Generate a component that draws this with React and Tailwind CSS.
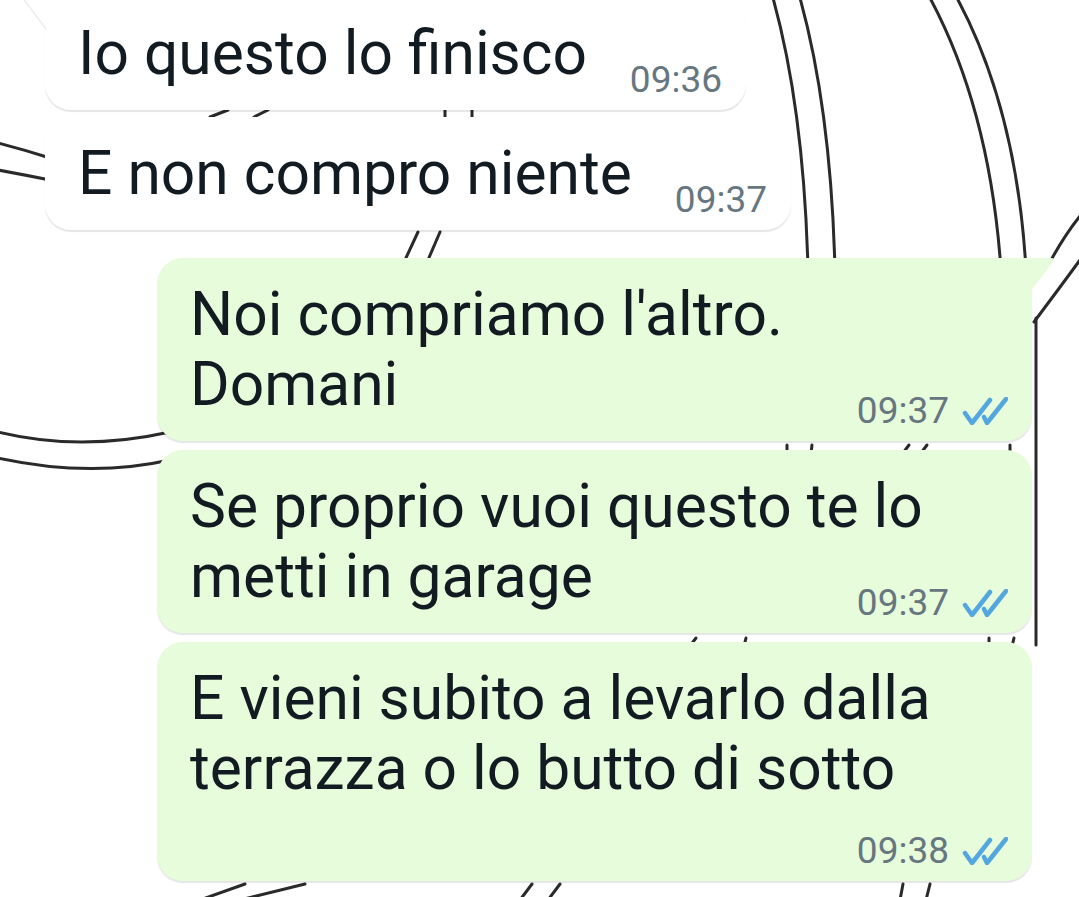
import React from "react";

function Ticks() {
  return (
    <svg width="46" height="28" viewBox="0 0 46 28" className="mb-[4px] ml-[13px]">
      <path d="M3 16 L10 26 L28 3" fill="none" stroke="#53a6de" strokeWidth="4.5" strokeLinecap="round" strokeLinejoin="round" />
      <path d="M22 20 L25 26 L44 2" fill="none" stroke="#53a6de" strokeWidth="4.5" strokeLinecap="round" strokeLinejoin="round" />
    </svg>
  );
}

function Doodles() {
  return (
    <svg className="absolute inset-0 w-full h-full" viewBox="0 0 1079 897" fill="none" stroke="#2a2a2a" strokeWidth="3" strokeLinecap="round">
      {/* arcs top right */}
      <path d="M773 -2 Q804 110 808 270" />
      <path d="M800 -2 Q831 110 835 270" />
      <path d="M930 -2 Q990 110 1001 270" />
      <path d="M957 -2 Q1017 110 1026 270" />
      <path d="M1080 216 Q1064 236 1050 262" />
      <path d="M1080 260 Q1058 290 1034 322" />
      <path d="M1036 318 L1036 645" />
      {/* left curves */}
      <path d="M-2 143 Q25 150 50 158" />
      <path d="M-2 170 Q25 175 50 180" />
      <path d="M-2 432 Q80 452 170 432" />
      <path d="M-2 458 Q90 478 170 460" />
      {/* dashes between bubbles */}
      <path d="M210 117 L228 110" />
      <path d="M254 117 L268 110" />
      <path d="M445 110 L445 117" />
      <path d="M472 110 L472 117" />
      <path d="M405 260 L418 232" />
      <path d="M428 260 L440 232" />
      <path d="M787 453 L787 445" />
      <path d="M811 453 L812 445" />
      <path d="M903 453 L909 445" />
      <path d="M921 453 L927 445" />
      <path d="M1010 453 L1010 445" />
      <path d="M690 646 L696 638" />
      <path d="M744 646 L746 638" />
      <path d="M989 646 L989 638" />
      <path d="M1012 646 L1014 638" />
      <path d="M200 900 L245 884" />
      <path d="M240 900 L305 884" />
      <path d="M520 900 L532 884" />
      <path d="M548 900 L560 884" />
      <path d="M900 900 L903 884" />
      <path d="M926 900 L930 884" />
    </svg>
  );
}

function Bubble({ out, width, tail, time, children, extraBottom }) {
  return (
    <div
      className={
        "relative pl-[33px] pr-[24px] pt-[22px] text-[60.5px] leading-[70px] text-[#111b21] rounded-[26px] shadow-[0_2px_1px_rgba(0,0,0,0.1)] " +
        (out ? "bg-[#e7fcda] self-end mr-[47px] " : "bg-white ml-[45px] ") +
        (tail && out ? "rounded-tr-none " : "") +
        (tail && !out ? "rounded-tl-none " : "") +
        (extraBottom ? "pb-[77px]" : "pb-[21px]")
      }
      style={{ width }}
    >
      {tail && !out && (
        <svg width="24" height="34" viewBox="0 0 24 34" className="absolute left-[-22px] top-0 drop-shadow-[-1px_1px_0_rgba(0,0,0,0.08)]">
          <path d="M24 0 H4 Q0 0 2 3 L24 32 Z" fill="#ffffff" />
        </svg>
      )}
      {tail && out && (
        <svg width="26" height="36" viewBox="0 0 26 36" className="absolute right-[-24px] top-0">
          <path d="M0 0 H21 Q26 0 23 4 L0 34 Z" fill="#e7fcda" />
        </svg>
      )}
      <div>{children}</div>
      <div className="absolute bottom-[12px] right-[24px] flex items-end text-[37px] leading-none text-[#667781]">
        <span>{time}</span>
        {out && <Ticks />}
      </div>
    </div>
  );
}

export default function App() {
  return (
    <div className="relative w-full h-[897px] bg-white overflow-hidden" style={{ fontFamily: "Roboto, 'Noto Sans', sans-serif" }}>
      <Doodles />
      <div className="relative flex flex-col">
        <div className="-mt-[3px]">
          <Bubble width={701} tail time="09:36">
            Io questo lo finisco
          </Bubble>
        </div>
        <div className="mt-[7px]">
          <Bubble width={746} time="09:37">
            E non compro niente
          </Bubble>
        </div>
        <div className="mt-[28px] flex justify-end">
          <Bubble out width={875} tail time="09:37">
            Noi compriamo l'altro.
            <br />
            Domani
          </Bubble>
        </div>
        <div className="mt-[9px] flex justify-end">
          <Bubble out width={875} time="09:37">
            Se proprio vuoi questo te lo
            <br />
            metti in garage
          </Bubble>
        </div>
        <div className="mt-[9px] flex justify-end">
          <Bubble out width={875} time="09:38" extraBottom>
            E vieni subito a levarlo dalla
            <br />
            terrazza o lo butto di sotto
          </Bubble>
        </div>
      </div>
    </div>
  );
}
